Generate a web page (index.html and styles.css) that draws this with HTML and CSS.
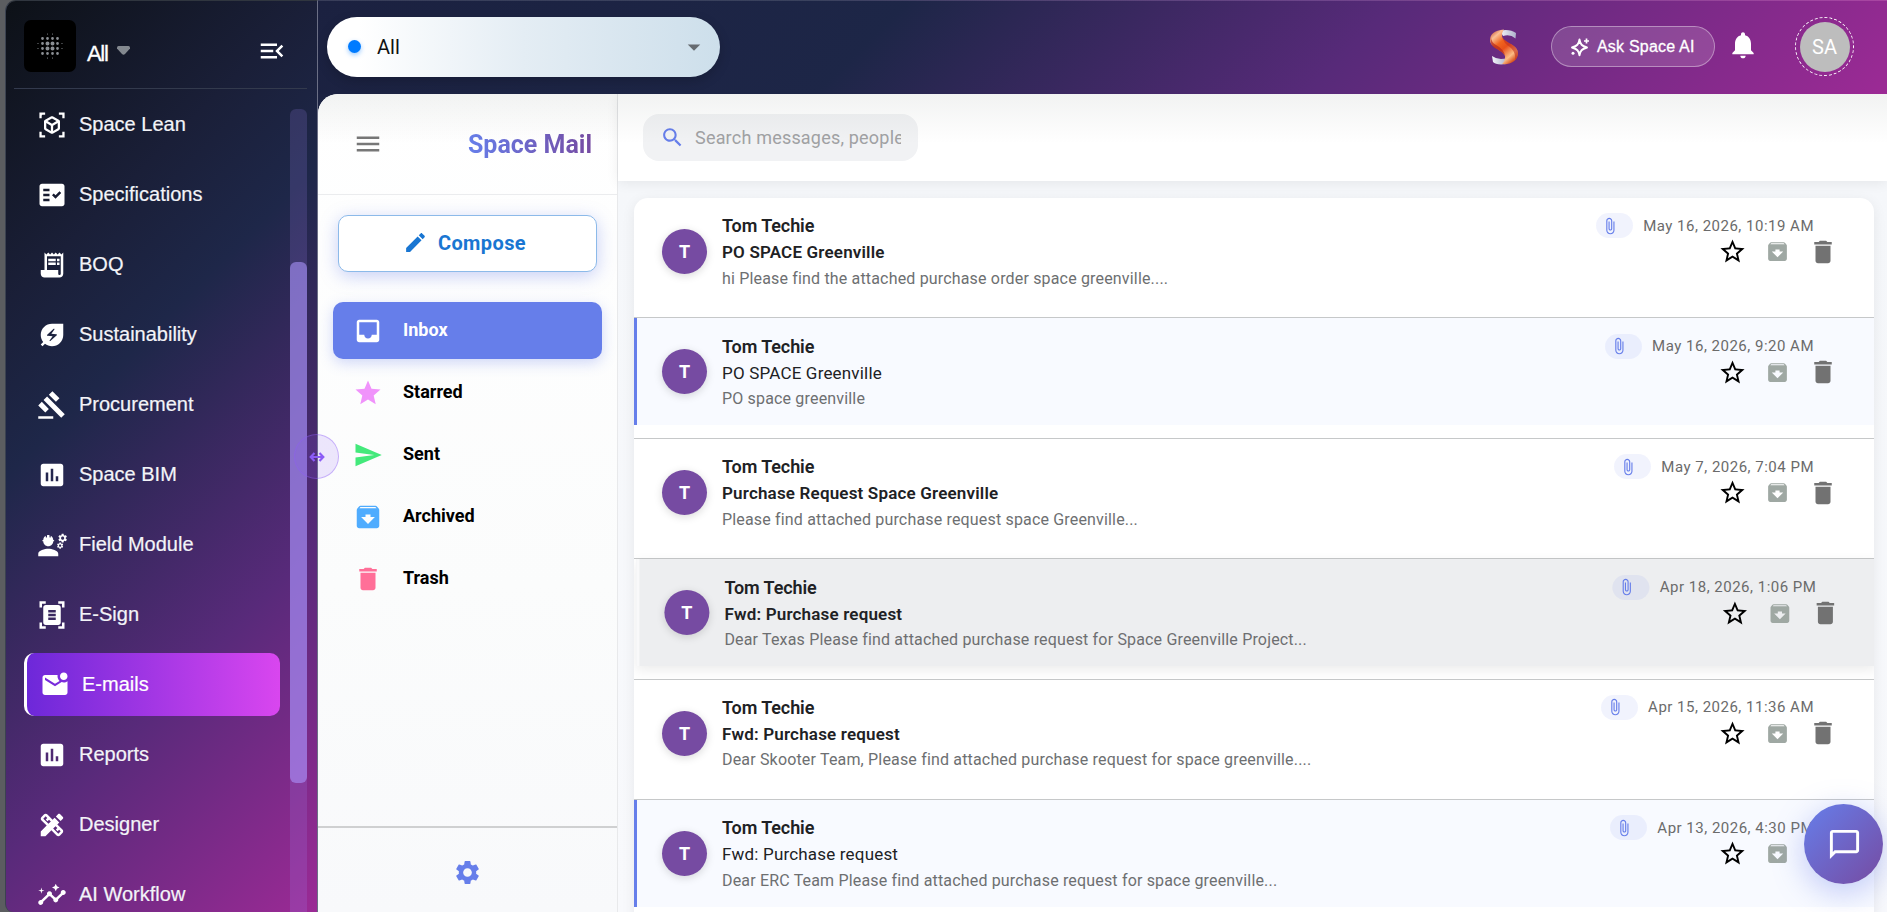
FILE: index.html
```html
<!DOCTYPE html>
<html lang="en">
<head>
    <meta charset="UTF-8">
    <meta name="viewport" content="width=device-width, initial-scale=1.0">
    <title>Space Mail</title>
    <link rel="stylesheet" href="styles.css">
</head>
<body>
    <!-- icon sprite -->
    <svg class="sprite">
        <symbol id="i-lean" viewBox="-1.1 -1.1 26.2 26.2"><path d="M3 4c0-.55.45-1 1-1h2V1H1v5h2V4zm0 16v-2H1v5h5v-2H3v-1zM18 1v2h3v3h2V1h-5zm3 20h-3v2h5v-5h-2v3zm-2-6.13V9.13c0-.72-.38-1.38-1-1.73l-5-2.88c-.31-.18-.65-.27-1-.27s-.69.09-1 .27L6 7.39c-.62.36-1 1.02-1 1.74v5.74c0 .72.38 1.38 1 1.73l5 2.88c.31.18.65.27 1 .27s.69-.09 1-.27l5-2.88c.62-.35 1-1.01 1-1.73zm-8 2.3l-4-2.3v-4.63l4 2.33v4.6zm1-6.33L8.04 8.53 12 6.25l3.96 2.28L12 10.84zm5 4.03l-4 2.3v-4.6l4-2.33v4.63z"/></symbol>
        <symbol id="i-spec" viewBox="0 0 24 24"><path d="M20 3H4c-1.1 0-2 .9-2 2v14c0 1.1.9 2 2 2h16c1.1 0 2-.9 2-2V5c0-1.1-.9-2-2-2zM10 17H5v-2h5v2zm0-4H5v-2h5v2zm0-4H5V7h5v2zm4.82 6L12 12.16l1.41-1.41 1.41 1.42L17.99 9l1.42 1.42L14.82 15z"/></symbol>
        <symbol id="i-boq" viewBox="0 0 24 24"><path d="M19.5 3.5L18 2l-1.5 1.5L15 2l-1.5 1.5L12 2l-1.5 1.5L9 2 7.5 3.5 6 2v14H3v3c0 1.66 1.34 3 3 3h12c1.66 0 3-1.34 3-3V2l-1.5 1.5zM19 19c0 .55-.45 1-1 1s-1-.45-1-1v-3H8V5h11v14z"/><path d="M9 7h6v2H9zM16 7h2v2h-2zM9 10h6v2H9zM16 10h2v2h-2z"/></symbol>
        <symbol id="i-leaf" viewBox="0 0 24 24"><path d="M12 3c-4.8 0-9 3.86-9 9 0 2.12.74 4.07 1.97 5.61L3 19.59 4.41 21l1.97-1.97C7.93 20.26 9.88 21 12 21c2.3 0 4.61-.88 6.36-2.64C20.12 16.61 21 14.3 21 12V3h-9zm3.83 9.26-5.16 4.63c-.16.15-.41.14-.56-.01-.14-.16-.16-.39-.04-.55l2.44-3.33-4.05-.4c-.44-.04-.63-.59-.3-.89l5.16-4.63c.16-.15.41-.14.56.01.14.16.16.39.04.55l-2.44 3.33 4.05.4c.45.04.63.59.3.89z"/></symbol>
        <symbol id="i-gavel" viewBox="0 0 24 24"><path d="M1 21h12v2H1zM5.245 8.07l2.83-2.827 14.14 14.142-2.828 2.828zM12.317 1l5.657 5.656-2.83 2.83-5.654-5.66zM3.825 9.485l5.657 5.657-2.828 2.828-5.657-5.657z"/></symbol>
        <symbol id="i-chart" viewBox="0 0 24 24"><path d="M19 3H5c-1.1 0-2 .9-2 2v14c0 1.1.9 2 2 2h14c1.1 0 2-.9 2-2V5c0-1.1-.9-2-2-2zM9 17H7v-7h2v7zm4 0h-2V7h2v10zm4 0h-2v-4h2v4z"/></symbol>
        <symbol id="i-field" viewBox="0 0 24 24"><path d="M9 15c-2.67 0-8 1.34-8 4v2h16v-2c0-2.66-5.33-4-8-4zM4.74 9H5c0 2.21 1.79 4 4 4s4-1.79 4-4h.26c.27 0 .49-.22.49-.49v-.02c0-.27-.22-.49-.49-.49H13c0-1.48-.81-2.75-2-3.45v.95c0 .28-.22.5-.5.5s-.5-.22-.5-.5V4.14C9.68 4.06 9.35 4 9 4s-.68.06-1 .14V5.5c0 .28-.22.5-.5.5S7 5.78 7 5.5v-.95C5.81 5.25 5 6.52 5 8h-.26c-.27 0-.49.22-.49.49v.03c0 .26.22.48.49.48z"/><path d="M22.98 6.23l.93-.83-.75-1.3-1.19.39c-.14-.11-.3-.2-.47-.27L21.25 3h-1.5l-.25 1.22c-.17.07-.33.16-.48.27l-1.18-.39-.75 1.3.93.83c-.02.17-.02.35 0 .52l-.93.85.75 1.3 1.2-.38c.13.1.28.18.43.25l.28 1.23h1.5l.27-1.22c.16-.07.3-.15.44-.25l1.19.38.75-1.3-.93-.85c.03-.19.02-.36.01-.53zM20.5 7.75c-.69 0-1.25-.56-1.25-1.25s.56-1.25 1.25-1.25 1.25.56 1.25 1.25-.56 1.25-1.25 1.25zM20.4 10.79l-.85.28c-.1-.08-.21-.14-.33-.19l-.18-.88h-1.07l-.18.87c-.12.05-.24.12-.34.19l-.84-.28-.54.93.66.59c-.01.13-.01.25 0 .37l-.66.61.54.93.86-.27c.1.07.2.13.31.18l.18.88h1.07l.19-.87c.11-.05.22-.11.32-.18l.85.27.54-.93-.66-.61c.01-.13.01-.25 0-.37l.66-.59-.53-.93zm-1.9 2.6c-.49 0-.89-.4-.89-.89s.4-.89.89-.89.89.4.89.89-.4.89-.89.89z"/></symbol>
        <symbol id="i-scan" viewBox="0 0 24 24"><path d="M7 3H4v3H2V1h5v2zm15 3V1h-5v2h3v3h2zM7 21H4v-3H2v5h5v-2zm13-3v3h-3v2h5v-5h-2zM19 18c0 1.1-.9 2-2 2H7c-1.1 0-2-.9-2-2V6c0-1.1.9-2 2-2h10c1.1 0 2 .9 2 2v12zM15 8H9v2h6V8zm0 3H9v2h6v-2zm0 3H9v2h6v-2z"/></symbol>
        <symbol id="i-mail" viewBox="0 0 24 24"><path d="M22 8.98V18c0 1.1-.9 2-2 2H4c-1.1 0-2-.9-2-2V6c0-1.1.9-2 2-2h10.1c-.06.32-.1.66-.1 1 0 1.48.65 2.79 1.67 3.71L12 11 4 6v2l8 5 5.3-3.32c.54.2 1.1.32 1.7.32 1.13 0 2.16-.39 3-1.02zM16 5c0 1.66 1.34 3 3 3s3-1.34 3-3-1.34-3-3-3-3 1.34-3 3z"/></symbol>
        <symbol id="i-design" viewBox="0 0 24 24"><path d="M16.24 11.51l1.57-1.57-3.75-3.75-1.57 1.57-4.14-4.13c-.78-.78-2.05-.78-2.83 0l-1.9 1.9c-.78.78-.78 2.05 0 2.83l4.13 4.13L3 17.25V21h3.75l4.76-4.76 4.13 4.13c.95.95 2.23.6 2.83 0l1.9-1.9c.78-.78.78-2.05 0-2.83l-4.13-4.13zm-7.06-.44L5.04 6.94l1.89-1.9L8.2 6.31 7.02 7.5l1.41 1.41 1.19-1.19 1.45 1.45-1.89 1.9zm7.88 7.89l-4.13-4.13 1.9-1.9 1.45 1.45-1.19 1.19 1.41 1.41 1.19-1.19 1.27 1.27-1.9 1.9zM20.71 7.04c.39-.39.39-1.02 0-1.41l-2.34-2.34c-.47-.47-1.12-.29-1.41 0l-1.83 1.83 3.75 3.75 1.83-1.83z"/></symbol>
        <symbol id="i-flow" viewBox="0 0 24 24"><path d="M21 8c-1.45 0-2.26 1.44-1.93 2.51l-3.55 3.56c-.3-.09-.74-.09-1.04 0l-2.55-2.55C12.27 10.45 11.46 9 10 9c-1.45 0-2.27 1.44-1.93 2.52l-4.56 4.55C2.44 15.74 1 16.55 1 18c0 1.1.9 2 2 2 1.45 0 2.26-1.44 1.93-2.51l4.55-4.56c.3.09.74.09 1.04 0l2.55 2.55C12.73 16.55 13.54 18 15 18c1.45 0 2.27-1.44 1.93-2.52l3.56-3.55c1.07.33 2.51-.48 2.51-1.93 0-1.1-.9-2-2-2z"/><path d="M15 9l.94-2.07L18 6l-2.06-.93L15 3l-.92 2.07L12 6l2.08.93zM3.5 11L4 9l2-.5L4 8l-.5-2L3 8l-2 .5L3 9z"/></symbol>
        <symbol id="i-collapse" viewBox="0 0 24 24"><path d="M3 18h13v-2H3v2zm0-5h10v-2H3v2zm0-7v2h13V6H3zm18 9.59L17.42 12 21 8.41 19.59 7l-5 5 5 5L21 15.59z"/></symbol>
        <symbol id="i-menu" viewBox="0 0 24 24"><path d="M3 18h18v-2H3v2zm0-5h18v-2H3v2zm0-7v2h18V6H3z"/></symbol>
        <symbol id="i-pencil" viewBox="0 0 24 24"><path d="M3 17.25V21h3.75L17.81 9.94l-3.75-3.75L3 17.25zM20.71 7.04c.39-.39.39-1.02 0-1.41l-2.34-2.34c-.39-.39-1.02-.39-1.41 0l-1.83 1.83 3.75 3.75 1.83-1.83z"/></symbol>
        <symbol id="i-inbox" viewBox="0 0 24 24"><path d="M19 3H4.99c-1.11 0-1.98.89-1.98 2L3 19c0 1.1.88 2 1.99 2H19c1.1 0 2-.9 2-2V5c0-1.11-.9-2-2-2zm0 12h-4c0 1.66-1.35 3-3 3s-3-1.34-3-3H4.99V5H19v10z"/></symbol>
        <symbol id="i-star" viewBox="0 0 24 24"><path d="M12 17.27L18.18 21l-1.64-7.03L22 9.24l-7.19-.61L12 2 9.19 8.63 2 9.24l5.46 4.73L5.82 21z"/></symbol>
        <symbol id="i-star-o" viewBox="0 0 24 24"><path d="M22 9.24l-7.19-.62L12 2 9.19 8.63 2 9.24l5.46 4.73L5.82 21 12 17.27 18.18 21l-1.63-7.03L22 9.24zM12 15.4l-3.76 2.27 1-4.28-3.32-2.88 4.38-.38L12 6.1l1.71 4.04 4.38.38-3.32 2.88 1 4.28L12 15.4z"/></symbol>
        <symbol id="i-send" viewBox="0 0 24 24"><path d="M2.01 21L23 12 2.01 3 2 10l15 2-15 2z"/></symbol>
        <symbol id="i-archive" viewBox="0 0 24 24"><path d="M20.54 5.23l-1.39-1.68C18.88 3.21 18.47 3 18 3H6c-.47 0-.88.21-1.16.55L3.46 5.23C3.17 5.57 3 6.02 3 6.5V19c0 1.1.9 2 2 2h14c1.1 0 2-.9 2-2V6.5c0-.48-.17-.93-.46-1.27zM12 17.5L6.5 12H10v-2h4v2h3.5L12 17.5zM5.12 5l.81-1h12l.94 1H5.12z"/></symbol>
        <symbol id="i-trash" viewBox="0 0 24 24"><path d="M6 19c0 1.1.9 2 2 2h8c1.1 0 2-.9 2-2V7H6v12zM19 4h-3.5l-1-1h-5l-1 1H5v2h14V4z"/></symbol>
        <symbol id="i-gear" viewBox="0 0 24 24"><path d="M19.14 12.94c.04-.3.06-.61.06-.94 0-.32-.02-.64-.07-.94l2.03-1.58c.18-.14.23-.41.12-.61l-1.92-3.32c-.12-.22-.37-.29-.59-.22l-2.39.96c-.5-.38-1.03-.7-1.62-.94l-.36-2.54c-.04-.24-.24-.41-.48-.41h-3.84c-.24 0-.43.17-.47.41l-.36 2.54c-.59.24-1.13.57-1.62.94l-2.39-.96c-.22-.08-.47 0-.59.22L2.74 8.87c-.12.21-.08.47.12.61l2.03 1.58c-.05.3-.09.63-.09.94s.02.64.07.94l-2.03 1.58c-.18.14-.23.41-.12.61l1.92 3.32c.12.22.37.29.59.22l2.39-.96c.5.38 1.03.7 1.62.94l.36 2.54c.05.24.24.41.48.41h3.84c.24 0 .44-.17.47-.41l.36-2.54c.59-.24 1.13-.56 1.62-.94l2.39.96c.22.08.47 0 .59-.22l1.92-3.32c.12-.22.07-.47-.12-.61l-2.01-1.58zM12 15.6c-1.98 0-3.6-1.62-3.6-3.6s1.62-3.6 3.6-3.6 3.6 1.62 3.6 3.6-1.62 3.6-3.6 3.6z"/></symbol>
        <symbol id="i-search" viewBox="0 0 24 24"><path d="M15.5 14h-.79l-.28-.27C15.41 12.59 16 11.11 16 9.5 16 5.91 13.09 3 9.5 3S3 5.91 3 9.5 5.91 16 9.5 16c1.61 0 3.09-.59 4.23-1.57l.27.28v.79l5 4.99L20.49 19l-4.99-5zm-6 0C7.01 14 5 11.99 5 9.5S7.01 5 9.5 5 14 7.01 14 9.5 11.99 14 9.5 14z"/></symbol>
        <symbol id="i-clip" viewBox="0 0 24 24"><path d="M16.5 6v11.5c0 2.21-1.79 4-4 4s-4-1.79-4-4V5c0-1.38 1.12-2.5 2.5-2.5s2.5 1.12 2.5 2.5v10.5c0 .55-.45 1-1 1s-1-.45-1-1V6H10v9.5c0 1.38 1.12 2.5 2.5 2.5s2.5-1.12 2.5-2.5V5c0-2.21-1.79-4-4-4S7 2.79 7 5v12.5c0 3.04 2.46 5.5 5.5 5.5s5.5-2.46 5.5-5.5V6h-1.5z"/></symbol>
        <symbol id="i-bell" viewBox="0 0 24 24"><path d="M12 22c1.1 0 2-.9 2-2h-4c0 1.1.89 2 2 2zm6-6v-5c0-3.07-1.64-5.64-4.5-6.32V4c0-.83-.67-1.5-1.5-1.5s-1.5.67-1.5 1.5v.68C7.63 5.36 6 7.92 6 11v5l-2 2v1h16v-1l-2-2z"/></symbol>
        <symbol id="i-caret" viewBox="0 0 24 24"><path d="M7 10l5 5 5-5z"/></symbol>
        <symbol id="i-chat" viewBox="0 0 24 24"><path d="M20 2H4c-1.1 0-2 .9-2 2v18l4-4h14c1.1 0 2-.9 2-2V4c0-1.1-.9-2-2-2zm0 14H5.17L4 17.17V4h16v12z"/></symbol>
    </svg>

    <div class="app">
        <aside class="sidebar">
            <div class="brand">
                <div class="brand-logo">
                    <svg width="26" height="26" viewBox="0 0 26 26">
                        <g stroke="#8b8f94" stroke-linecap="round" fill="none">
                            <path d="M10.500 1v0M15.500 1v0M1 10.500v0M1 15.500v0M25 10.500v0M25 15.500v0M10.500 25v0M15.500 25v0" stroke-width="1.200"/>
                            <path d="M5.500 5.500v0M5.500 20.500v0M20.500 5.500v0M20.500 20.500v0M10.500 5.500v0M15.500 5.500v0M5.500 10.500v0M5.500 15.500v0M20.500 10.500v0M20.500 15.500v0M10.500 20.500v0M15.500 20.500v0" stroke-width="2.800"/>
                            <path d="M10.500 10.500v0M15.500 10.500v0M10.500 15.500v0M15.500 15.500v0" stroke-width="4"/>
                        </g>
                    </svg>
                </div>
                <span class="brand-name">All</span>
                <svg class="brand-caret" width="13" height="9" viewBox="0 0 13 9"><path d="M1.500 0h10q1.500 0 1.500 1.500v1L8 8q-1.500 1.300-3 0L0 2.500v-1Q0 0 1.500 0z"/></svg>
                <svg class="icon collapse"><use href="#i-collapse"/></svg>
            </div>
            <div class="menu-wrap">
                <nav class="menu">
                    <a class="menu-item"><svg class="icon"><use href="#i-lean"/></svg>Space Lean</a>
                    <a class="menu-item"><svg class="icon"><use href="#i-spec"/></svg>Specifications</a>
                    <a class="menu-item"><svg class="icon"><use href="#i-boq"/></svg>BOQ</a>
                    <a class="menu-item"><svg class="icon"><use href="#i-leaf"/></svg>Sustainability</a>
                    <a class="menu-item"><svg class="icon"><use href="#i-gavel"/></svg>Procurement</a>
                    <a class="menu-item"><svg class="icon"><use href="#i-chart"/></svg>Space BIM</a>
                    <a class="menu-item"><svg class="icon"><use href="#i-field"/></svg>Field Module</a>
                    <a class="menu-item"><svg class="icon"><use href="#i-scan"/></svg>E-Sign</a>
                    <a class="menu-item active"><svg class="icon"><use href="#i-mail"/></svg>E-mails</a>
                    <a class="menu-item"><svg class="icon"><use href="#i-chart"/></svg>Reports</a>
                    <a class="menu-item"><svg class="icon"><use href="#i-design"/></svg>Designer</a>
                    <a class="menu-item"><svg class="icon"><use href="#i-flow"/></svg>AI Workflow</a>
                </nav>
                <div class="scroll-track"><div class="scroll-thumb"></div></div>
            </div>
        </aside>

        <div class="resize-handle">
            <svg width="16" height="12" viewBox="0 0 16 12"><path d="M2 6h12M5.500 2L1.700 6l3.800 4M10.500 2l3.800 4-3.800 4" fill="none" stroke="#8b5cf6" stroke-width="2.200"/></svg>
        </div>

        <div class="main">
            <header class="topbar">
                <div class="project-select">
                    <span class="dot"></span>
                    <span>All</span>
                    <svg class="icon caret"><use href="#i-caret"/></svg>
                </div>
                <svg class="s-logo" width="28" height="36" viewBox="0 0 28 36">
                    <defs>
                        <linearGradient id="orange" x1="0" y1="0" x2=".7" y2="1">
                            <stop offset="0" stop-color="#b9301c"/>
                            <stop offset=".22" stop-color="#fbc096"/>
                            <stop offset=".42" stop-color="#f0641f"/>
                            <stop offset=".6" stop-color="#e8501a"/>
                            <stop offset=".85" stop-color="#fbbd86"/>
                            <stop offset="1" stop-color="#d9531f"/>
                        </linearGradient>
                        <linearGradient id="silver" x1="0" y1="0" x2="1" y2="0">
                            <stop offset="0" stop-color="#f2f4fa"/>
                            <stop offset="1" stop-color="#aeb1cb"/>
                        </linearGradient>
                    </defs>
                    <path d="M10 1.500Q20-.5 26 4L25.500 9.500Q20 4.500 13 7Z" fill="url(#silver)"/>
                    <path d="M2 27Q8 31.500 17 29L17 35Q6 36.500 3 33Z" fill="url(#silver)"/>
                    <path d="M14 .5C4 1 0 6 0 11c0 8 13 10 15 16 .5 4-1 6-3 8 8 1 16-3 16-11 0-9-15-10-16-17-.4-3 1-5 2-6.500z" fill="url(#orange)"/>
                    <path d="M1 8Q-1 14 4 18.500 14 23 15.500 28 14 20 6 16 1 13 1 8z" fill="#b3261e" opacity=".7"/>
                    <path d="M12 7c1 7 16 8 16 17q0 4-3 7 1-7-4-12Q13 14 12 7z" fill="#c2311f" opacity=".6"/>
                </svg>
                <button class="ask-btn">
                    <svg width="20" height="20" viewBox="0 0 20 20">
                        <path d="M9.500 2.500C10.300 7.300 11.800 9 17 10.500 11.800 12 10.300 13.700 9.500 18.300 8.700 13.700 7.200 12 2 10.500 7.200 9 8.700 7.300 9.500 2.500z" fill="none" stroke="#fff" stroke-width="1.900" stroke-linejoin="round"/>
                        <path d="M16.500 1.500v5M14 4h5" stroke="#fff" stroke-width="1.700"/>
                        <circle cx="3" cy="16.300" r="1.500" fill="#fff"/>
                    </svg>
                    Ask Space AI
                </button>
                <svg class="icon bell"><use href="#i-bell"/></svg>
                <div class="user-ring"><div class="user">SA</div></div>
            </header>

            <div class="content">
                <section class="folders">
                    <div class="folders-head">
                        <svg class="icon"><use href="#i-menu"/></svg>
                        <h1>Space Mail</h1>
                    </div>
                    <button class="compose"><svg class="icon"><use href="#i-pencil"/></svg>Compose</button>
                    <div class="folder-list">
                        <a class="folder selected"><svg class="icon"><use href="#i-inbox"/></svg><span>Inbox</span></a>
                        <a class="folder starred"><svg class="icon"><use href="#i-star"/></svg><span>Starred</span></a>
                        <a class="folder sent"><svg class="icon"><use href="#i-send"/></svg><span>Sent</span></a>
                        <a class="folder archived"><svg class="icon"><use href="#i-archive"/></svg><span>Archived</span></a>
                        <a class="folder trash"><svg class="icon"><use href="#i-trash"/></svg><span>Trash</span></a>
                    </div>
                    <div class="folders-foot"><svg class="icon"><use href="#i-gear"/></svg></div>
                </section>

                <section class="mail">
                    <div class="mail-head">
                        <div class="search">
                            <svg class="icon"><use href="#i-search"/></svg>
                            <input type="text" placeholder="Search messages, people, or keywords">
                        </div>
                    </div>
                    <div class="mail-body">
                        <div class="mail-list">
                            <div class="mail-item">
                                <div class="mail-row">
                                    <div class="avatar">T</div>
                                    <div class="mail-text">
                                        <div class="from">Tom Techie</div>
                                        <div class="subject">PO SPACE Greenville</div>
                                        <div class="preview">hi Please find the attached purchase order space greenville....</div>
                                    </div>
                                    <div class="mail-meta">
                                        <div class="when"><span class="chip"><svg class="icon"><use href="#i-clip"/></svg></span>May 16, 2026, 10:19 AM</div>
                                        <div class="actions"><svg class="icon star"><use href="#i-star-o"/></svg><svg class="icon arch"><use href="#i-archive"/></svg><svg class="icon del"><use href="#i-trash"/></svg></div>
                                    </div>
                                </div>
                            </div>
                            <div class="mail-item">
                                <div class="mail-row unread">
                                    <div class="avatar">T</div>
                                    <div class="mail-text">
                                        <div class="from">Tom Techie</div>
                                        <div class="subject">PO SPACE Greenville</div>
                                        <div class="preview">PO space greenville</div>
                                    </div>
                                    <div class="mail-meta">
                                        <div class="when"><span class="chip"><svg class="icon"><use href="#i-clip"/></svg></span>May 16, 2026, 9:20 AM</div>
                                        <div class="actions"><svg class="icon star"><use href="#i-star-o"/></svg><svg class="icon arch"><use href="#i-archive"/></svg><svg class="icon del"><use href="#i-trash"/></svg></div>
                                    </div>
                                </div>
                            </div>
                            <div class="mail-item">
                                <div class="mail-row">
                                    <div class="avatar">T</div>
                                    <div class="mail-text">
                                        <div class="from">Tom Techie</div>
                                        <div class="subject">Purchase Request Space Greenville</div>
                                        <div class="preview">Please find attached purchase request space Greenville...</div>
                                    </div>
                                    <div class="mail-meta">
                                        <div class="when"><span class="chip"><svg class="icon"><use href="#i-clip"/></svg></span>May 7, 2026, 7:04 PM</div>
                                        <div class="actions"><svg class="icon star"><use href="#i-star-o"/></svg><svg class="icon arch"><use href="#i-archive"/></svg><svg class="icon del"><use href="#i-trash"/></svg></div>
                                    </div>
                                </div>
                            </div>
                            <div class="mail-item">
                                <div class="mail-row hovered">
                                    <div class="avatar">T</div>
                                    <div class="mail-text">
                                        <div class="from">Tom Techie</div>
                                        <div class="subject">Fwd: Purchase request</div>
                                        <div class="preview">Dear Texas Please find attached purchase request for Space Greenville Project...</div>
                                    </div>
                                    <div class="mail-meta">
                                        <div class="when"><span class="chip"><svg class="icon"><use href="#i-clip"/></svg></span>Apr 18, 2026, 1:06 PM</div>
                                        <div class="actions"><svg class="icon star"><use href="#i-star-o"/></svg><svg class="icon arch"><use href="#i-archive"/></svg><svg class="icon del"><use href="#i-trash"/></svg></div>
                                    </div>
                                </div>
                            </div>
                            <div class="mail-item">
                                <div class="mail-row">
                                    <div class="avatar">T</div>
                                    <div class="mail-text">
                                        <div class="from">Tom Techie</div>
                                        <div class="subject">Fwd: Purchase request</div>
                                        <div class="preview">Dear Skooter Team, Please find attached purchase request for space greenville....</div>
                                    </div>
                                    <div class="mail-meta">
                                        <div class="when"><span class="chip"><svg class="icon"><use href="#i-clip"/></svg></span>Apr 15, 2026, 11:36 AM</div>
                                        <div class="actions"><svg class="icon star"><use href="#i-star-o"/></svg><svg class="icon arch"><use href="#i-archive"/></svg><svg class="icon del"><use href="#i-trash"/></svg></div>
                                    </div>
                                </div>
                            </div>
                            <div class="mail-item">
                                <div class="mail-row unread">
                                    <div class="avatar">T</div>
                                    <div class="mail-text">
                                        <div class="from">Tom Techie</div>
                                        <div class="subject">Fwd: Purchase request</div>
                                        <div class="preview">Dear ERC Team Please find attached purchase request for space greenville...</div>
                                    </div>
                                    <div class="mail-meta">
                                        <div class="when"><span class="chip"><svg class="icon"><use href="#i-clip"/></svg></span>Apr 13, 2026, 4:30 PM</div>
                                        <div class="actions"><svg class="icon star"><use href="#i-star-o"/></svg><svg class="icon arch"><use href="#i-archive"/></svg><svg class="icon del"><use href="#i-trash"/></svg></div>
                                    </div>
                                </div>
                            </div>
                        </div>
                    </div>
                </section>
            </div>
        </div>

        <button class="chat-fab"><svg class="icon"><use href="#i-chat"/></svg></button>
    </div>
</body>
</html>
```

FILE: styles.css
```css
* {
    box-sizing: border-box;
}
body {
    margin: 0;
    background: #5b5d60;
    font-family: Roboto, "Liberation Sans", sans-serif;
    overflow: hidden;
}
.sprite {
    display: none;
}
.icon {
    width: 30px;
    height: 30px;
    fill: currentColor;
    flex-shrink: 0;
}
button {
    font-family: inherit;
    cursor: pointer;
}
.app {
    position: relative;
    display: flex;
    height: 912px;
    padding-left: 5px;
    overflow: hidden;
}

/* sidebar */
.sidebar {
    width: 313px;
    flex-shrink: 0;
    display: flex;
    flex-direction: column;
    border: 1px solid #6b6f85;
    border-left-color: #3b4250;
    border-top-color: #30363f;
    border-bottom: none;
    border-radius: 11px 0 0 8px;
    background: linear-gradient(135deg, #0d1117 0%, #1a1f38 25%, #1e2749 39%, #582a7a 70%, #9b2a95 100%);
    color: #fff;
    font-family: "Liberation Sans", Arial, sans-serif;
    overflow: hidden;
}
.brand {
    display: flex;
    align-items: center;
    height: 88px;
    flex-shrink: 0;
    margin: 0 10px 0 8px;
    padding: 0 20px 4px 10px;
    border-bottom: 1px solid #333a4d;
}
.brand-logo {
    display: flex;
    align-items: center;
    justify-content: center;
    width: 52px;
    height: 52px;
    margin-top: 10px;
    margin-bottom: 4px;
    border-radius: 7px;
    background: #000;
}
.brand-name {
    margin: 22px 9px 0 11px;
    font-size: 22px;
    letter-spacing: -1.300px;
    -webkit-text-stroke: 0.3px #fff;
}
.brand-caret {
    margin-top: 16px;
    fill: #83888f;
}
.collapse {
    margin-left: auto;
    margin-top: 16px;
}
.menu-wrap {
    display: flex;
    flex: 1;
    min-height: 0;
    padding-right: 10px;
}
.menu {
    display: flex;
    flex-direction: column;
    gap: 7px;
    flex: 1;
    padding: 4px 10px 0 18px;
}
.menu-item {
    display: flex;
    align-items: center;
    gap: 12px;
    height: 63px;
    flex-shrink: 0;
    padding-left: 13px;
    font-size: 20px;
    color: #f3f4f8;
    -webkit-text-stroke: 0.2px;
}
.menu-item .icon {
    color: #fff;
}
.menu-item.active {
    border-left: 3px solid #fff;
    border-radius: 10px;
    background: linear-gradient(90deg, #6d28d9, #d946ef);
    color: #fff;
}
.scroll-track {
    width: 17px;
    margin-top: 20px;
    padding-top: 153px;
    border-radius: 6px 6px 0 0;
    background: rgba(167, 139, 250, 0.18);
}
.scroll-thumb {
    height: 521px;
    border-radius: 6px;
    background: rgba(172, 150, 255, 0.58);
}
.resize-handle {
    position: absolute;
    z-index: 5;
    left: 294px;
    top: 434px;
    width: 45px;
    height: 45px;
    display: flex;
    align-items: center;
    justify-content: center;
    border: 1px solid rgba(139, 92, 246, 0.4);
    border-radius: 50%;
    background: rgba(139, 92, 246, 0.14);
}

/* top bar */
.main {
    flex: 1;
    min-width: 0;
    display: flex;
    flex-direction: column;
    background: #1c2342;
}
.topbar {
    display: flex;
    align-items: center;
    height: 94px;
    flex-shrink: 0;
    padding: 0 33px 2px 9px;
    border-top: 1px solid rgba(255, 255, 255, 0.13);
    background: linear-gradient(135deg, #1b2140 0%, #1d2647 35.5%, #572a79 65%, #9c2a95 100%);
}
.project-select {
    display: flex;
    align-items: center;
    width: 393px;
    height: 60px;
    padding: 0 11px 0 21px;
    border-radius: 30px;
    background: linear-gradient(90deg, #fff 8%, #e4edf4 50%, #cddfeb 100%);
    box-shadow: 0 4px 12px rgba(0, 0, 0, 0.18);
    color: #111;
    font-size: 20px;
}
.dot {
    width: 13px;
    height: 13px;
    margin-right: 16px;
    border-radius: 50%;
    background: #007bff;
    box-shadow: 0 2px 5px rgba(0, 123, 255, 0.4);
}
.project-select .caret {
    margin-left: auto;
    color: #666b70;
}
.s-logo {
    margin-left: auto;
}
.ask-btn {
    display: flex;
    align-items: center;
    gap: 7px;
    width: 164px;
    height: 41px;
    margin-left: 33px;
    padding: 0 0 0 18px;
    border: 1px solid rgba(255, 255, 255, 0.38);
    border-radius: 21px;
    background: rgba(255, 255, 255, 0.14);
    color: #fff;
    font-family: "Liberation Sans", Arial, sans-serif;
    font-size: 16px;
    letter-spacing: 0.2px;
    white-space: nowrap;
    -webkit-text-stroke: 0.3px #fff;
}
.bell {
    width: 32px;
    height: 32px;
    margin-left: 12px;
    margin-bottom: 3px;
    color: #fff;
}
.user-ring {
    display: flex;
    align-items: center;
    justify-content: center;
    width: 59px;
    height: 59px;
    margin-left: 36px;
    border: 1px dashed #fff;
    border-radius: 50%;
}
.user {
    width: 50px;
    height: 50px;
    border-radius: 50%;
    background: #bdbdbd;
    color: #fff;
    font-size: 20px;
    line-height: 50px;
    text-align: center;
}

/* folders column */
.content {
    position: relative;
    display: flex;
    flex: 1;
    min-height: 0;
    border-radius: 20px 0 0 0;
    background: #fff;
    overflow: hidden;
}
/* soft shade under the top bar */
.content::before {
    content: "";
    position: absolute;
    z-index: 3;
    left: 0;
    right: 0;
    top: 0;
    height: 50px;
    background: linear-gradient(rgba(10, 30, 20, 0.055), rgba(10, 30, 20, 0.035) 35%, transparent);
    pointer-events: none;
}
.folders {
    width: 300px;
    flex-shrink: 0;
    display: flex;
    flex-direction: column;
    border-right: 1px solid #e8e9eb;
    background: linear-gradient(180deg, #fff 0%, #fbfcfc 60%, #f8f9fb 100%);
}
.folders-head {
    display: flex;
    align-items: center;
    justify-content: space-between;
    height: 101px;
    flex-shrink: 0;
    padding: 0 25px 0 35px;
    border-bottom: 1px solid #ebecee;
    color: #777;
}
.folders-head h1 {
    margin: 0;
    font-size: 25px;
    font-weight: 700;
    letter-spacing: 0;
    background: linear-gradient(90deg, #667eea, #764ba2);
    -webkit-background-clip: text;
    background-clip: text;
    color: transparent;
}
.compose {
    display: flex;
    align-items: center;
    justify-content: center;
    gap: 10px;
    height: 57px;
    flex-shrink: 0;
    margin: 20px 20px 0;
    padding: 0 12px 2px 6px;
    border: 1px solid #8cbae9;
    border-radius: 10px;
    background: #fff;
    box-shadow: 0 4px 18px rgba(102, 126, 234, 0.36);
    color: #1976d2;
    font-size: 20px;
    font-weight: 700;
    letter-spacing: 0.4px;
}
.compose .icon {
    width: 25px;
    height: 25px;
}
.folder-list {
    display: flex;
    flex-direction: column;
    gap: 5px;
    flex: 1;
    padding: 30px 15px 0 15px;
}
.folder {
    display: flex;
    align-items: center;
    gap: 20px;
    height: 57px;
    padding-left: 20px;
    border-radius: 10px;
    color: #000;
    font-size: 18px;
    font-weight: 700;
}
.folder span {
    margin-top: -2px;
}
.folder.selected {
    background: #667eea;
    box-shadow: 0 4px 14px rgba(102, 126, 234, 0.3);
    color: #fff;
}
.folder.starred .icon { color: #f093fb; }
.folder.sent .icon { color: #43e97b; }
.folder.archived .icon { color: #4facfe; }
.folder.trash .icon { color: #ff6f98; }
.folders-foot {
    display: flex;
    align-items: center;
    justify-content: center;
    height: 86px;
    flex-shrink: 0;
    padding: 5px 1px 0 0;
    border-top: 2px solid #cfd0d1;
    color: #667eea;
}
.folders-foot .icon {
    width: 29px;
    height: 29px;
}

/* mail column */
.mail {
    flex: 1;
    min-width: 0;
    display: flex;
    flex-direction: column;
}
.mail-head {
    position: relative;
    height: 87px;
    flex-shrink: 0;
    padding: 20px 25px;
    background: #fff;
    box-shadow: 0 2px 12px rgba(0, 0, 0, 0.07);
}
.search {
    display: flex;
    align-items: center;
    width: 275px;
    height: 47px;
    padding: 0 17px;
    border-radius: 16px;
    background: #f1f2f4;
}
.search .icon {
    width: 25px;
    height: 25px;
    color: #667eea;
}
.search input {
    flex: 1;
    min-width: 0;
    margin-left: 10px;
    padding: 0;
    border: none;
    outline: none;
    background: transparent;
    font-family: inherit;
    font-size: 18px;
    letter-spacing: 0.200px;
}
.search input::placeholder {
    color: #a0a1a3;
}
.mail-body {
    flex: 1;
    min-height: 0;
    padding: 17px 13px 0 16px;
    background: linear-gradient(180deg, #f5f7fa, #f8f9fc);
}
.mail-list {
    height: 730px;
    border-radius: 14px 14px 0 0;
    background: #fff;
    box-shadow: 0 3px 14px rgba(0, 0, 0, 0.07);
    overflow: hidden;
}
.mail-item {
    height: 120.400px;
    border-bottom: 1px solid #c6c8c9;
}
.mail-row {
    display: flex;
    height: 106.600px;
    padding: 15.400px 60px 0 25px;
    border-left: 3px solid transparent;
}
.mail-row.unread {
    border-left-color: #667eea;
    background: #f8faff;
}
.mail-row.hovered {
    border-left-color: #f9f9fa;
    background: #edeef0;
    box-shadow: 0 4px 12px rgba(0, 0, 0, 0.08);
    transform: translateX(2.400px);
}
.avatar {
    width: 45px;
    height: 45px;
    margin: 15.600px 15px 0 0;
    flex-shrink: 0;
    border-radius: 50%;
    background: #764ba2;
    box-shadow: 0 2px 8px rgba(0, 0, 0, 0.15);
    color: #fff;
    font-size: 18px;
    font-weight: 700;
    line-height: 45px;
    text-align: center;
}
.mail-text {
    flex: 1;
    min-width: 0;
    color: #202124;
    white-space: nowrap;
}
.from {
    font-size: 18px;
    font-weight: 600;
    line-height: 26px;
    letter-spacing: -0.100px;
}
.subject {
    font-size: 17px;
    font-weight: 600;
    line-height: 27.400px;
    letter-spacing: 0.180px;
}
.unread .subject {
    font-weight: 400;
}
.preview {
    color: #6d6f71;
    font-size: 16px;
    line-height: 23px;
    letter-spacing: 0.170px;
}
.mail-meta {
    display: flex;
    flex-direction: column;
    align-items: flex-end;
}
.when {
    display: flex;
    align-items: center;
    height: 25px;
    color: #6b6b6b;
    font-size: 15px;
    letter-spacing: 0.500px;
}
.chip {
    display: flex;
    align-items: center;
    width: 37px;
    height: 25px;
    margin-right: 10px;
    padding-left: 5px;
    border-radius: 13px;
    background: rgba(102, 126, 234, 0.09);
    color: #667eea;
}
.chip .icon {
    width: 18px;
    height: 18px;
}
.actions {
    display: flex;
    align-items: center;
    height: 27px;
    margin-right: -24px;
}
.star {
    width: 29px;
    height: 29px;
    color: #000;
}
.arch {
    width: 25px;
    height: 25px;
    margin: 0 18px;
    color: #9fa8a3;
}
.del {
    color: #727272;
}

.chat-fab {
    position: absolute;
    z-index: 6;
    right: 4px;
    bottom: 28px;
    width: 79px;
    height: 80px;
    display: flex;
    align-items: center;
    justify-content: center;
    padding: 0 0 0 2px;
    border: none;
    border-radius: 50%;
    background: linear-gradient(135deg, #667eea, #764ba2);
    box-shadow: 0 8px 32px rgba(102, 126, 234, 0.4);
    color: #fff;
}
.chat-fab .icon {
    width: 35px;
    height: 35px;
}
```
